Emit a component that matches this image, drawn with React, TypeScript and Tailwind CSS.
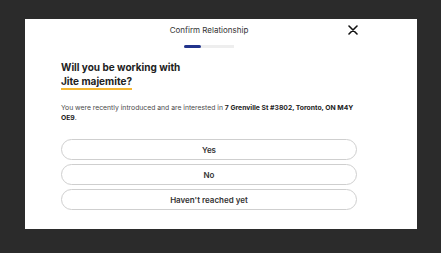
import React from "react";

export default function App() {
  const font = { fontFamily: "Inter, 'Noto Sans', sans-serif" };
  return (
    <div className="w-[441px] h-[253px] bg-[#2b2b2b] pt-[19px] pl-[25px]" style={font}>
      <div className="w-[392px] h-[210px] bg-white flex flex-col relative">
        <div className="h-[22px] pr-[24px] flex items-center justify-center text-[8px] text-[#333]">
          Confirm Relationship
        </div>
        <button className="absolute left-[322px] top-[5px] w-[12px] h-[12px] flex items-center justify-center">
          <svg width="10" height="10" viewBox="0 0 10 10">
            <path d="M1 1L9 9M9 1L1 9" stroke="#111" strokeWidth="1.6" strokeLinecap="round" />
          </svg>
        </button>
        <div className="ml-[159px] mt-[4px] w-[50px] h-[3px] bg-[#eeeeee] flex">
          <div className="w-[17px] h-[3px] bg-[#22348c] rounded-sm" />
        </div>
        <div className="ml-[36px] mt-[12px] text-[10px] leading-[14px] font-bold text-[#222]">
          <div>Will you be working with</div>
          <div className="inline-block border-b-2 border-[#f4b630]">Jite majemite?</div>
        </div>
        <p className="ml-[36px] mt-[13px] w-[300px] text-[6.8px] leading-[10px] text-[#4a4a4a]">
          You were recently introduced and are interested in{" "}
          <b className="font-bold text-[#222]">7 Grenville St #3802, Toronto, ON M4Y OE9</b>.
        </p>
        <div className="ml-[36px] mt-[16px] w-[296px] flex flex-col gap-[4px]">
          {["Yes", "No", "Haven't reached yet"].map((t) => (
            <div
              key={t}
              className="h-[21px] rounded-full border border-[#cfcfcf] flex items-center justify-center text-[8px] font-semibold text-[#333]"
            >
              {t}
            </div>
          ))}
        </div>
      </div>
    </div>
  );
}
